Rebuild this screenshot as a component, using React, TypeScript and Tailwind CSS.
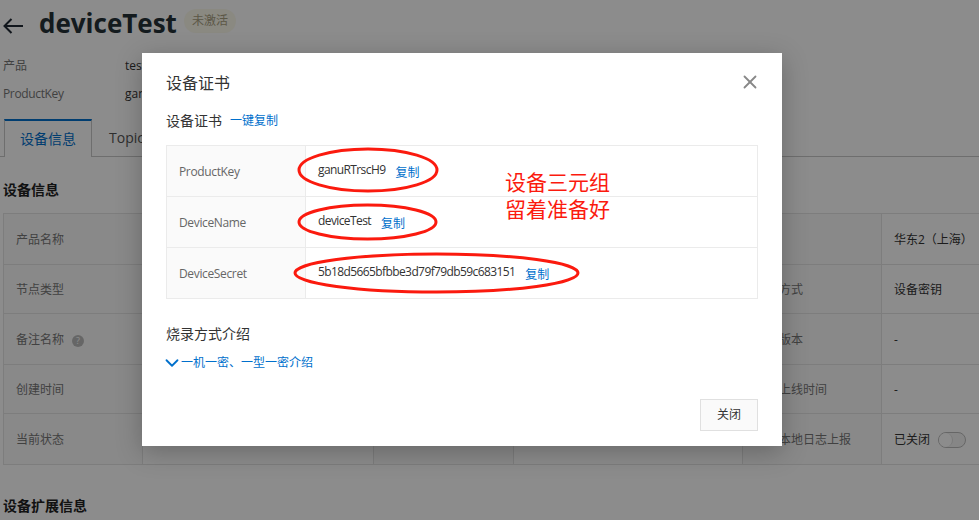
import { X, ChevronDown } from "lucide-react";

const font = { fontFamily: '"Open Sans", "Noto Sans CJK SC", sans-serif' };

const infoRows = [
  { label: "产品名称", right: "地域", value: "华东2（上海）", h: "h-[51px]" },
  { label: "节点类型", right: "认证方式", value: "设备密钥", h: "h-[49px]" },
  { label: "备注名称", right: "固件版本", value: "-", h: "h-[51px]", help: true },
  { label: "创建时间", right: "最后上线时间", value: "-", h: "h-[49px]" },
  { label: "当前状态", right: "设备本地日志上报", value: "已关闭", h: "h-[51px]", toggle: true },
];

const certRows = [
  { label: "ProductKey", value: "ganuRTrscH9" },
  { label: "DeviceName", value: "deviceTest" },
  { label: "DeviceSecret", value: "5b18d5665bfbbe3d79f79db59c683151" },
];

const Page = () => (
  <div className="bg-white w-[979px] h-[520px] overflow-hidden">
    <div className="flex items-center h-[46px] pl-[3px]">
      <svg width="20" height="16" viewBox="0 0 20 16" fill="none" stroke="#1f2933" strokeWidth="2" className="mt-[5px]">
        <path d="M20 8H1.5M8.5 1 1.5 8l7 7" />
      </svg>
      <h1 className="ml-[16px] text-[26px] leading-[46px] font-bold text-[#263238]">deviceTest</h1>
      <span className="ml-[7px] -mt-[4px] w-[52px] h-[24px] rounded-full bg-[#fbf9ec] text-[12px] text-[#a8a080] flex items-center justify-center">
        未激活
      </span>
    </div>
    <div className="flex items-center mt-[6px] h-[28px] pl-[3px] text-[12px]">
      <span className="w-[122px] text-[#777]">产品</span>
      <span className="text-[#333]">test</span>
    </div>
    <div className="flex items-center h-[28px] pl-[3px] text-[12px]">
      <span className="w-[122px] text-[#777] tracking-[-0.35px]">ProductKey</span>
      <span className="text-[#333]">ganuRTrscH9</span>
    </div>
    <div className="flex h-[38px] mt-[11px] border-b border-[#c8c8c8] pl-[4px] text-[14px]">
      <div className="w-[88px] h-[38px] pb-[2px] bg-white border-t-2 border-x border-t-[#0070cc] border-x-[#c8c8c8] text-[#0070cc] flex items-center justify-center">
        设备信息
      </div>
      <div className="w-[90px] pl-[17px] flex items-center text-[#555]">Topic 列表</div>
    </div>
    <h2 className="mt-[24px] pl-[3px] text-[14px] leading-[18px] font-bold text-[#222]">设备信息</h2>
    <div className="mt-[14px] ml-[3px] w-[976px] border-t border-l border-[#e4e4e4]">
      {infoRows.map((row) => (
        <div
          key={row.label}
          className={`${row.h} grid grid-cols-[139px_231px_140px_229px_139px_98px] border-b border-[#e4e4e4] text-[12px]`}
        >
          <div className="bg-[#fafafa] border-r border-[#e4e4e4] pl-[12px] pt-[2px] flex items-center gap-[8px] text-[#777]">
            {row.label}
            {row.help && (
              <span className="w-[12px] h-[12px] mt-[1px] rounded-full bg-[#bbb] text-white text-[9px] leading-none flex items-center justify-center">
                ?
              </span>
            )}
          </div>
          <div className="border-r border-[#e4e4e4]" />
          <div className="bg-[#fafafa] border-r border-[#e4e4e4]" />
          <div className="border-r border-[#e4e4e4]" />
          <div className="bg-[#fafafa] border-r border-[#e4e4e4] pl-[12px] pt-[2px] flex items-center whitespace-nowrap text-[#777]">
            {row.right}
          </div>
          <div className="pl-[12px] pt-[2px] flex items-center text-[#333] whitespace-nowrap">
            {row.value}
            {row.toggle && (
              <span className="ml-[8px] w-[28px] h-[16px] rounded-full border border-[#bbb] bg-[#f5f5f5] flex items-center">
                <span className="w-[14px] h-[14px] rounded-full bg-white border-r border-[#ddd]" />
              </span>
            )}
          </div>
        </div>
      ))}
    </div>
    <h2 className="mt-[32px] pl-[3px] text-[14px] leading-[18px] font-bold text-[#222]">设备扩展信息</h2>
  </div>
);

const CertDialog = () => (
  <div className="absolute left-[142px] top-[53px] w-[640px] h-[393px] bg-white shadow-[0_6px_24px_rgba(0,0,0,0.25)] px-[24px]">
    <div className="flex items-center justify-between h-[60px]">
      <h3 className="text-[16px] leading-[20px] text-[#333]">设备证书</h3>
      <X size={22} strokeWidth={2} className="text-[#888] -mr-[3px] -mt-[2px]" />
    </div>
    <div className="flex items-center gap-[8px] h-[20px] mt-[-3px]">
      <span className="text-[14px] text-[#333]">设备证书</span>
      <span className="text-[12px] text-[#0070cc] mt-[2px]">一键复制</span>
    </div>
    <div className="mt-[15px] border-t border-l border-r border-[#ebebeb]">
      {certRows.map((row) => (
        <div key={row.label} className="flex h-[51px] border-b border-[#ebebeb] text-[12px]">
          <div className="w-[139px] bg-[#fafafa] border-r border-[#ebebeb] pl-[12px] pt-[2px] flex items-center text-[#666] tracking-[-0.35px]">
            {row.label}
          </div>
          <div className="pl-[12px] flex items-center text-[#333]">
            <span className="-mt-[2px] tracking-[-0.6px]">{row.value}</span>
            <span className="ml-[10px] mt-[4px] text-[#0070cc]">复制</span>
          </div>
        </div>
      ))}
    </div>
    <h4 className="mt-[25px] text-[14px] leading-[20px] text-[#333]">烧录方式介绍</h4>
    <div className="flex items-center mt-[9px] h-[20px] text-[12px] text-[#0070cc]">
      <ChevronDown size={22} strokeWidth={2} className="-ml-[5px] -mr-[2px] shrink-0" />
      一机一密、一型一密介绍
    </div>
    <div className="flex justify-end mt-[26px]">
      <button className="w-[58px] h-[32px] bg-[#fafafa] border border-[#e0e0e0] text-[12px] text-[#333]">关闭</button>
    </div>
  </div>
);

export default function App() {
  return (
    <div className="relative w-[979px] h-[520px] overflow-hidden" style={font}>
      <Page />
      <div className="absolute inset-0 bg-black/45" />
      <CertDialog />
      {/* hand drawn annotations on top of the dialog */}
      <svg className="absolute left-0 top-0" width="979" height="520" fill="none" stroke="#fb1a0e" strokeWidth="3">
        <ellipse cx="368" cy="170" rx="69" ry="21" />
        <ellipse cx="367.5" cy="222" rx="68.5" ry="17" />
        <ellipse cx="436.5" cy="273" rx="141.5" ry="19" />
      </svg>
      <div className="absolute left-[505px] top-[169px] text-[21px] leading-[27px] text-[#fb1a0e]">
        设备三元组
        <br />
        留着准备好
      </div>
    </div>
  );
}
